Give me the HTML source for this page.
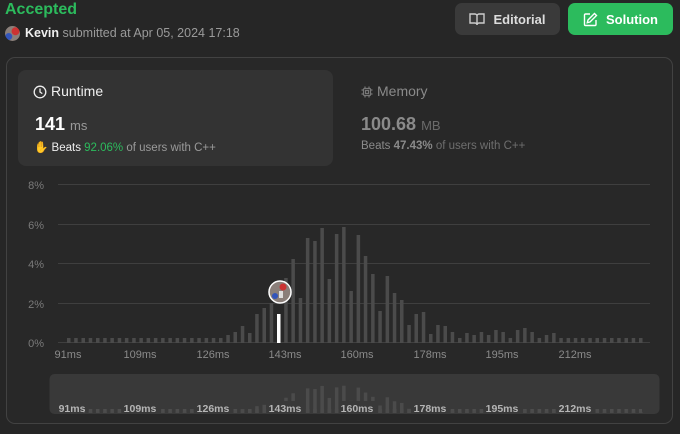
<!DOCTYPE html>
<html><head><meta charset="utf-8"><style>
*{margin:0;padding:0;box-sizing:border-box}
body{width:680px;height:434px;background:#262626;font-family:"Liberation Sans",sans-serif;position:relative;overflow:hidden;color:#eee}
.abs{position:absolute}
.btn{position:absolute;top:3px;height:32px;border-radius:7px;font-weight:bold;font-size:13px;display:flex;align-items:center;justify-content:center;gap:8px}
rect.b{width:3.5px}
</style></head><body>
<div class="abs" style="left:5px;top:1px;font-size:16px;font-weight:bold;color:#2cbb5d">Accepted</div>
<div class="abs" style="left:5px;top:26px;width:15px;height:15px;border-radius:50%;background:radial-gradient(circle at 70% 35%,#c33 0 25%,transparent 30%),radial-gradient(circle at 25% 70%,#3355bb 0 20%,transparent 25%),#8a7f7a"></div>
<div class="abs" style="left:25px;top:26px;font-size:12.5px;color:#9a9a9a"><b style="color:#f0f0f0">Kevin</b> submitted at Apr 05, 2024 17:18</div>

<div class="btn" style="left:455px;width:105px;background:#3a3a3a;color:#ddd">
<svg width="16" height="14" viewBox="0 0 16 14" fill="none" stroke="#ccc" stroke-width="1.4"><path d="M1 2h5a2 2 0 0 1 2 2v9a2 2 0 0 0-2-2H1z M15 2h-5a2 2 0 0 0-2 2v9a2 2 0 0 1 2-2h5z"/></svg>Editorial</div>
<div class="btn" style="left:568px;width:105px;background:#2cbb5d;color:#fff">
<svg width="15" height="15" viewBox="0 0 15 15" fill="none" stroke="#fff" stroke-width="1.4"><path d="M7 2H2.5A1 1 0 0 0 1.5 3v9.5a1 1 0 0 0 1 1H12a1 1 0 0 0 1-1V8"/><path d="M11.5 1.5l2 2L7 10l-2.7.7.7-2.7z"/></svg>Solution</div>

<div class="abs" style="left:6px;top:57px;width:667px;height:367px;border:1px solid #424242;border-radius:9px;background:#282828"></div>
<div class="abs" style="left:18px;top:70px;width:315px;height:96px;border-radius:8px;background:#333"></div>
<svg class="abs" style="left:33px;top:85px" width="14" height="14" viewBox="0 0 14 14" fill="none" stroke="#eee" stroke-width="1.3"><circle cx="7" cy="7" r="5.8"/><path d="M7 3.5V7l2.3 1.6"/></svg>
<div class="abs" style="left:51px;top:83px;font-size:14px;color:#f0f0f0">Runtime</div>
<div class="abs" style="left:35px;top:114px;font-size:18px;font-weight:bold;color:#fff">141 <span style="font-size:13px;font-weight:normal;color:#9a9a9a">ms</span></div>
<div class="abs" style="left:34px;top:140px;font-size:11.5px;color:#9a9a9a"><span style="color:#2cbb5d">✋</span> <span style="color:#eee">Beats</span> <span style="color:#2cbb5d">92.06%</span> of users with C++</div>

<svg class="abs" style="left:361px;top:86px" width="12" height="12" viewBox="0 0 12 12" fill="none" stroke="#777" stroke-width="1.2"><rect x="2.5" y="2.5" width="7" height="7" rx="1"/><rect x="4.5" y="4.5" width="3" height="3"/><path d="M4 0.5v2M8 0.5v2M4 9.5v2M8 9.5v2M0.5 4h2M0.5 8h2M9.5 4h2M9.5 8h2"/></svg>
<div class="abs" style="left:377px;top:83px;font-size:14px;color:#8a8a8a">Memory</div>
<div class="abs" style="left:361px;top:114px;font-size:18px;font-weight:bold;color:#8a8a8a">100.68 <span style="font-size:13px;font-weight:normal;color:#6a6a6a">MB</span></div>
<div class="abs" style="left:361px;top:140px;font-size:11.5px;color:#6e6e6e"><span style="color:#8a8a8a">Beats <b>47.43%</b></span> of users with C++</div>

<svg class="abs" style="left:0;top:0" width="680" height="434" font-family="Liberation Sans, sans-serif" font-size="11">
<g stroke="#3f3f3f" stroke-width="1"><path d="M58 184.5H650M58 224.5H650M58 263.5H650M58 303.5H650M58 342.5H650"/></g>
<g fill="#7a7a7a" text-anchor="end"><text x="44" y="189">8%</text><text x="44" y="229">6%</text><text x="44" y="268">4%</text><text x="44" y="308">2%</text><text x="44" y="347">0%</text></g>
<g id="bars" fill="#4b4b4b">
<rect x="67.0" y="338" width="3.5" height="5"/><rect x="74.2" y="338" width="3.5" height="5"/><rect x="81.5" y="338" width="3.5" height="5"/><rect x="88.7" y="338" width="3.5" height="5"/><rect x="96.0" y="338" width="3.5" height="5"/><rect x="103.2" y="338" width="3.5" height="5"/><rect x="110.4" y="338" width="3.5" height="5"/><rect x="117.7" y="338" width="3.5" height="5"/><rect x="124.9" y="338" width="3.5" height="5"/><rect x="132.2" y="338" width="3.5" height="5"/><rect x="139.4" y="338" width="3.5" height="5"/><rect x="146.6" y="338" width="3.5" height="5"/><rect x="153.9" y="338" width="3.5" height="5"/><rect x="161.1" y="338" width="3.5" height="5"/><rect x="168.4" y="338" width="3.5" height="5"/><rect x="175.6" y="338" width="3.5" height="5"/><rect x="182.8" y="338" width="3.5" height="5"/><rect x="190.1" y="338" width="3.5" height="5"/><rect x="197.3" y="338" width="3.5" height="5"/><rect x="204.6" y="338" width="3.5" height="5"/><rect x="211.8" y="338" width="3.5" height="5"/><rect x="219.0" y="338" width="3.5" height="5"/>
<rect x="226.3" y="335" width="3.5" height="8"/><rect x="233.5" y="332" width="3.5" height="11"/><rect x="240.8" y="326" width="3.5" height="17"/><rect x="248.0" y="333" width="3.5" height="10"/><rect x="255.2" y="314" width="3.5" height="29"/><rect x="262.5" y="308" width="3.5" height="35"/><rect x="269.7" y="303" width="3.5" height="40"/>
<rect x="284.2" y="278" width="3.5" height="65"/><rect x="291.4" y="259" width="3.5" height="84"/><rect x="298.7" y="298" width="3.5" height="45"/><rect x="305.9" y="238" width="3.5" height="105"/><rect x="313.2" y="241" width="3.5" height="102"/><rect x="320.4" y="228" width="3.5" height="115"/><rect x="327.6" y="279" width="3.5" height="64"/><rect x="334.9" y="234" width="3.5" height="109"/><rect x="342.1" y="227" width="3.5" height="116"/><rect x="349.4" y="291" width="3.5" height="52"/><rect x="356.6" y="235" width="3.5" height="108"/><rect x="363.8" y="256" width="3.5" height="87"/><rect x="371.1" y="274" width="3.5" height="69"/><rect x="378.3" y="311" width="3.5" height="32"/><rect x="385.6" y="276" width="3.5" height="67"/><rect x="392.8" y="293" width="3.5" height="50"/><rect x="400.0" y="300" width="3.5" height="43"/><rect x="407.3" y="325" width="3.5" height="18"/><rect x="414.5" y="314" width="3.5" height="29"/><rect x="421.8" y="312" width="3.5" height="31"/><rect x="429.0" y="334" width="3.5" height="9"/><rect x="436.2" y="325" width="3.5" height="18"/><rect x="443.5" y="326" width="3.5" height="17"/><rect x="450.7" y="332" width="3.5" height="11"/><rect x="458.0" y="338" width="3.5" height="5"/><rect x="465.2" y="333" width="3.5" height="10"/><rect x="472.4" y="335" width="3.5" height="8"/><rect x="479.7" y="332" width="3.5" height="11"/><rect x="486.9" y="335" width="3.5" height="8"/><rect x="494.2" y="330" width="3.5" height="13"/><rect x="501.4" y="332" width="3.5" height="11"/><rect x="508.6" y="338" width="3.5" height="5"/><rect x="515.9" y="330" width="3.5" height="13"/><rect x="523.1" y="328" width="3.5" height="15"/><rect x="530.4" y="332" width="3.5" height="11"/><rect x="537.6" y="338" width="3.5" height="5"/><rect x="544.8" y="335" width="3.5" height="8"/><rect x="552.1" y="333" width="3.5" height="10"/>
<rect x="559.3" y="338" width="3.5" height="5"/><rect x="566.6" y="338" width="3.5" height="5"/><rect x="573.8" y="338" width="3.5" height="5"/><rect x="581.0" y="338" width="3.5" height="5"/><rect x="588.3" y="338" width="3.5" height="5"/><rect x="595.5" y="338" width="3.5" height="5"/><rect x="602.8" y="338" width="3.5" height="5"/><rect x="610.0" y="338" width="3.5" height="5"/><rect x="617.2" y="338" width="3.5" height="5"/><rect x="624.5" y="338" width="3.5" height="5"/><rect x="631.7" y="338" width="3.5" height="5"/><rect x="639.0" y="338" width="3.5" height="5"/>
</g>
<rect x="277" y="314" width="3.5" height="29" fill="#fff"/>
<circle cx="280" cy="292" r="11" fill="#8a7f7a" stroke="#fff" stroke-width="1.5"/>
<circle cx="283" cy="287" r="3.5" fill="#c33"/><circle cx="275" cy="296" r="3" fill="#3355bb"/><rect x="279" y="291" width="4" height="7" fill="#ddd"/>
<g fill="#8a8a8a" text-anchor="middle"><text x="68" y="358">91ms</text><text x="140" y="358">109ms</text><text x="213" y="358">126ms</text><text x="285" y="358">143ms</text><text x="357" y="358">160ms</text><text x="430" y="358">178ms</text><text x="502" y="358">195ms</text><text x="575" y="358">212ms</text></g>
<rect x="49.5" y="374" width="610" height="40" rx="5" fill="#393939"/>
<defs><pattern id="p" x="67" y="0" width="7.24" height="10" patternUnits="userSpaceOnUse"><rect width="3.5" height="10" fill="#4d4d4d"/></pattern></defs>
<rect x="67" y="409" width="575" height="4" fill="url(#p)"/>
<use href="#bars" transform="translate(0,413) scale(1,0.235) translate(0,-343)"/>
<g fill="#393939"><rect x="55" y="401" width="28" height="12"/><rect x="122" y="401" width="37" height="12"/><rect x="195" y="401" width="37" height="12"/><rect x="267" y="401" width="37" height="12"/><rect x="339" y="401" width="37" height="12"/><rect x="412" y="401" width="37" height="12"/><rect x="484" y="401" width="37" height="12"/><rect x="557" y="401" width="37" height="12"/></g>
<g fill="#b5b5b5" text-anchor="middle" font-weight="bold" font-size="10.5"><text x="72" y="412">91ms</text><text x="140" y="412">109ms</text><text x="213" y="412">126ms</text><text x="285" y="412">143ms</text><text x="357" y="412">160ms</text><text x="430" y="412">178ms</text><text x="502" y="412">195ms</text><text x="575" y="412">212ms</text></g>
</svg>
</body></html>
